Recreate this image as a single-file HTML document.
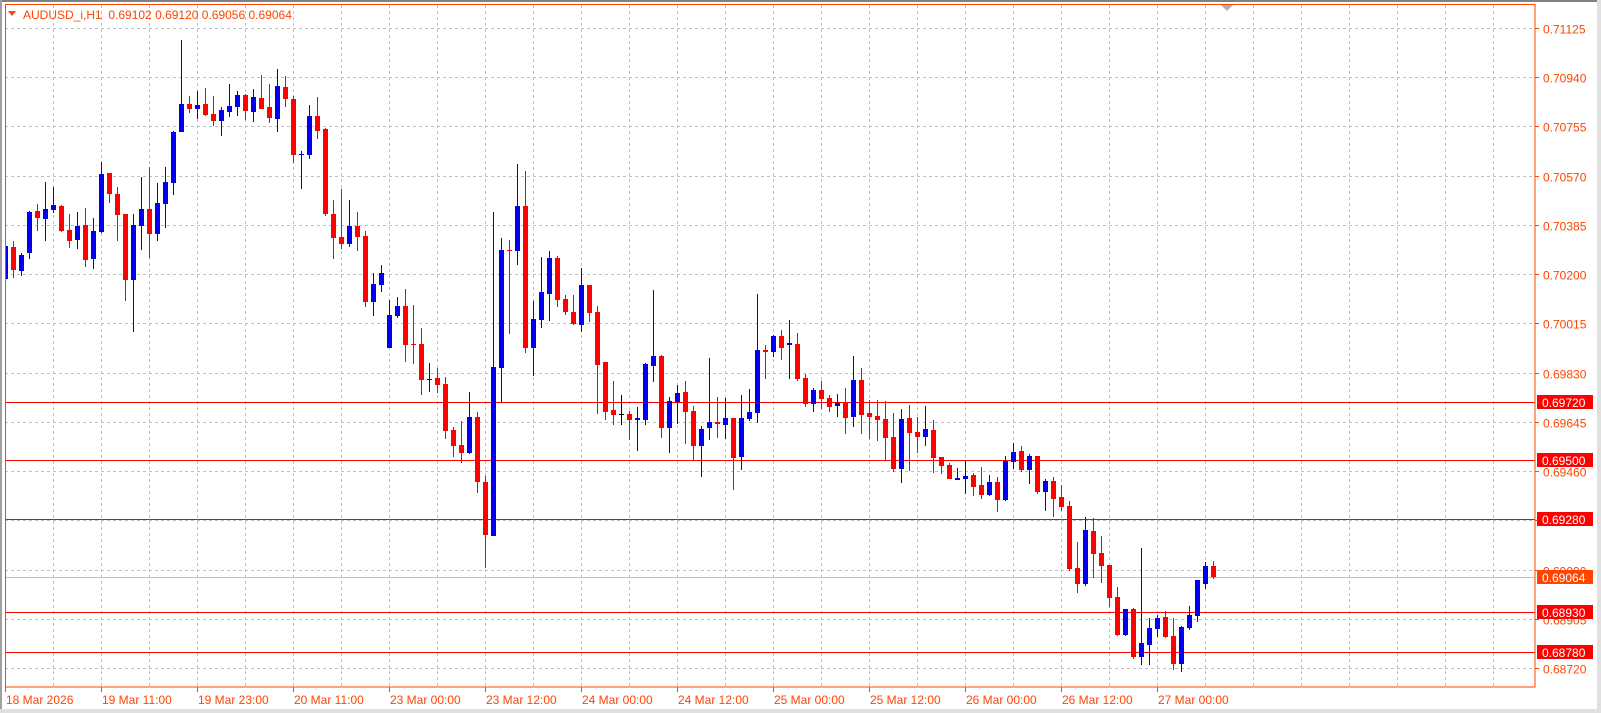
<!DOCTYPE html>
<html><head><meta charset="utf-8">
<style>
html,body{margin:0;padding:0;background:#fff;}
body{width:1601px;height:713px;overflow:hidden;position:relative;font-family:"Liberation Sans",sans-serif;}
svg{position:absolute;left:0;top:0;}
text{font-family:"Liberation Sans",sans-serif;font-size:12px;}
</style></head><body>
<svg id="s" width="1601" height="713" xmlns="http://www.w3.org/2000/svg">
<rect x="0" y="0" width="1601" height="2" fill="#808080"/>
<rect x="0" y="0" width="2" height="713" fill="#a0a0a0"/>
<rect x="1597" y="0" width="4" height="713" fill="#e0e0e0"/>
<rect x="0" y="709" width="1601" height="4" fill="#e0e0e0"/>
<g id="grid"></g>
<g id="lines"></g>
<g id="bars"></g>
<rect x="5.5" y="4.5" width="1529.5" height="682.5" fill="none" stroke="#ff4500" stroke-width="1"/>
<polygon points="1221,5 1233,5 1227,11" fill="#b0b0b0"/>
<polygon points="8,11 16,11 12,16" fill="#ff4500"/>
<text x="23" y="19" fill="#ff4500">AUDUSD_i,H1&#160; 0.69102 0.69120 0.69056 0.69064</text>
<g id="axis"></g>
</svg>
<script>
var NS="http://www.w3.org/2000/svg";
function el(p,t,a,txt){var e=document.createElementNS(NS,t);for(var k in a)e.setAttribute(k,a[k]);if(txt)e.textContent=txt;document.getElementById(p).appendChild(e);return e;}
// grid
for(var k=1;k<=31;k++){var x=5+48*k+0.5;el('grid','line',{x1:x,y1:5,x2:x,y2:687,stroke:'#c0c0c0','stroke-dasharray':'3,3'});}
var labels=['0.71125','0.70940','0.70755','0.70570','0.70385','0.70200','0.70015','0.69830','0.69645','0.69460','0.69275','0.69090','0.68905','0.68720'];
for(var k=0;k<14;k++){var y=Math.round(28+49.23*k)+0.5;el('grid','line',{x1:5,y1:y,x2:1535,y2:y,stroke:'#c0c0c0','stroke-dasharray':'3,3'});
el('axis','line',{x1:1535,y1:y,x2:1539,y2:y,stroke:'#ff4500'});
el('axis','text',{x:1543,y:y+5,fill:'#ff4500'},labels[k]);}
// level lines
var lv=[[402,'0.69720','#ff0000'],[460,'0.69500','#ff0000'],[519,'0.69280','#ff0000'],[612,'0.68930','#ff0000'],[652,'0.68780','#ff0000']];
el('lines','line',{x1:5,y1:577.5,x2:1535,y2:577.5,stroke:'#c0c0c0'});
lv.forEach(function(l){el('lines','line',{x1:5,y1:l[0]+0.5,x2:1535,y2:l[0]+0.5,stroke:l[2]});});
lv.push([577,'0.69064','#ff4500']);
lv.forEach(function(l){el('axis','rect',{x:1537,y:l[0]-7,width:56,height:14,fill:l[2]});el('axis','text',{x:1542,y:l[0]+5,fill:'#fff'},l[1]);});
// time axis
var tl=['18 Mar 2026','19 Mar 11:00','19 Mar 23:00','20 Mar 11:00','23 Mar 00:00','23 Mar 12:00','24 Mar 00:00','24 Mar 12:00','25 Mar 00:00','25 Mar 12:00','26 Mar 00:00','26 Mar 12:00','27 Mar 00:00'];
for(var i=0;i<tl.length;i++){var x=5+96*i;el('axis','line',{x1:x+0.5,y1:687,x2:x+0.5,y2:692,stroke:'#ff4500'});el('axis','text',{x:x+1,y:704,fill:'#ff4500'},tl[i]);}
// bars: [c, bodyTop, bodyBot, wickTop, wickBot] c: b=blue r=red k=black
var D=[
['b',246,279,235,279],['r',247,270,241,278],['b',255,271,253,276],['b',212,253,211,259],['r',211,218,204,231],['b',209,219,182,241],['b',205,210,187,213],['r',206,231,205,232],['r',230,241,214,248],['b',226,240,212,249],
['r',225,260,208,267],['b',231,259,218,269],['b',174,232,162,233],['r',173,194,173,203],['r',194,215,187,241],['r',214,280,214,301],['b',225,280,214,332],['b',209,226,177,250],['r',209,234,167,258],['b',203,234,183,241],
['b',182,204,167,228],['b',132,183,131,195],['b',104,132,40,132],['r',104,109,96,113],['b',105,109,91,119],['r',104,115,88,116],['r',114,121,96,126],['b',110,121,107,136],['b',106,112,84,117],['b',95,107,91,116],
['r',95,111,94,120],['b',97,112,89,122],['r',98,109,75,109],['r',107,118,84,123],['b',86,119,69,132],['r',87,99,76,107],['r',99,155,96,163],['b',154,155,151,189],['b',116,155,105,159],['r',116,131,97,139],
['r',129,214,128,216],['r',214,238,200,259],['r',237,244,189,249],['b',226,244,200,247],['r',226,237,212,251],['r',236,302,231,307],['b',284,302,273,316],['b',273,285,265,292],['b',315,348,300,348],['b',306,316,297,318],
['r',306,345,289,362],['r',344,345,305,364],['r',344,380,328,395],['b',379,380,363,392],['r',378,385,368,393],['r',384,431,377,439],['r',430,446,427,457],['r',445,453,421,463],['b',417,453,392,454],['r',417,482,412,493],
['r',482,535,476,568],['b',367,536,212,536],['b',250,368,238,403],['r',250,251,240,334],['b',206,251,164,265],['r',206,348,171,353],['b',319,348,301,376],['b',292,320,257,328],['b',258,294,251,321],['r',258,300,256,307],
['r',299,312,295,315],['r',312,324,295,325],['b',285,325,268,332],['r',285,313,285,322],['r',312,365,306,414],['r',362,412,362,420],['r',410,415,381,425],['k',414,415,395,425],['r',414,420,411,440],['b',418,420,407,451],
['b',364,420,363,425],['b',356,366,290,382],['r',356,428,355,438],['b',401,428,397,453],['b',393,402,385,424],['r',392,412,381,444],['r',411,446,406,460],['b',429,446,426,477],['b',422,428,358,440],['r',422,424,397,438],
['b',418,425,398,439],['r',418,458,418,490],['b',418,457,395,470],['b',412,419,389,421],['b',350,413,294,423],['r',350,352,345,379],['b',336,352,335,357],['r',336,348,330,360],['b',343,345,320,379],['r',344,379,333,381],
['r',378,404,374,407],['b',390,404,388,412],['r',390,399,381,409],['r',398,407,395,412],['b',403,406,394,417],['r',403,418,388,434],['b',380,417,356,427],['r',380,415,368,434],['r',413,417,400,439],['r',416,420,400,441],
['r',419,438,401,460],['r',437,469,413,472],['b',419,469,409,483],['r',418,433,405,471],['r',432,437,417,453],['b',429,437,406,446],['r',430,458,420,473],['r',457,466,457,474],['r',465,479,463,479],['b',478,480,468,480],
['b',476,479,461,494],['r',475,487,473,496],['r',485,495,467,499],['b',482,495,475,496],['r',482,500,477,512],['b',461,500,456,501],['b',452,462,443,469],['r',451,470,446,472],['b',456,470,454,484],['r',456,492,456,494],
['b',481,492,479,511],['r',481,499,477,517],['r',497,507,485,511],['r',506,569,501,571],['r',568,584,542,593],['b',530,584,517,586],['r',531,554,518,578],['r',553,566,536,583],['r',565,598,565,607],['r',597,635,587,636],
['b',609,635,609,636],['r',609,657,608,659],['b',643,657,548,665],['b',628,645,618,665],['b',618,629,615,637],['r',617,637,611,638],['r',636,664,618,670],['b',627,664,626,672],['b',615,628,606,630],['b',580,616,580,622],
['b',566,584,562,589],['r',566,577,561,579]];
var col={b:'#0000ee',r:'#ff0000',k:'#000000'};
D.forEach(function(d,i){var c=col[d[0]];var x=5+8*i;
el('bars','rect',{x:x,y:d[3],width:1,height:Math.max(1,d[4]-d[3]),fill:c});
var bx=x-2,bw=5;if(bx<6){bw-= (6-bx);bx=6;}
el('bars','rect',{x:bx,y:d[1],width:bw,height:Math.max(1,d[2]-d[1]),fill:c});});
</script>
</body></html>
